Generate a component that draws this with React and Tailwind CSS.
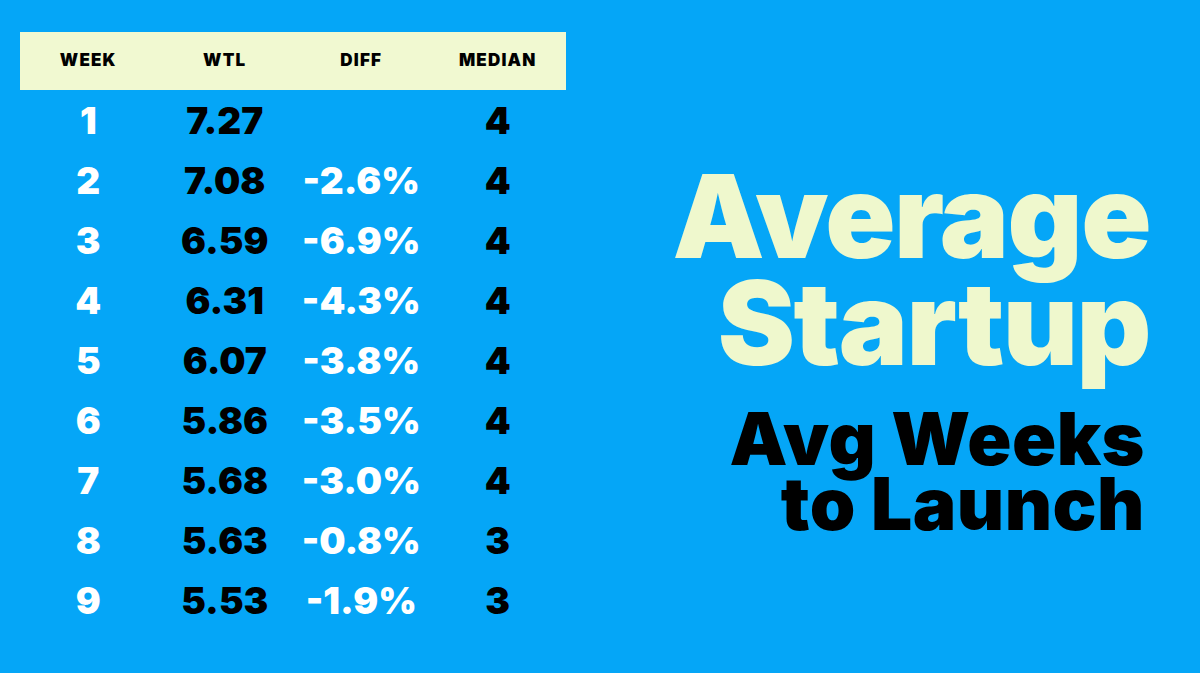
import React from "react";

const rows = [
  ["1", "7.27", "", "4"],
  ["2", "7.08", "-2.6%", "4"],
  ["3", "6.59", "-6.9%", "4"],
  ["4", "6.31", "-4.3%", "4"],
  ["5", "6.07", "-3.8%", "4"],
  ["6", "5.86", "-3.5%", "4"],
  ["7", "5.68", "-3.0%", "4"],
  ["8", "5.63", "-0.8%", "3"],
  ["9", "5.53", "-1.9%", "3"],
];

export default function App() {
  return (
    <div
      className="w-[1200px] h-[673px] bg-[#05a6f7] flex overflow-hidden"
      style={{ fontFamily: "Inter, 'Liberation Sans', sans-serif" }}
    >
      <div className="w-[546px] ml-[20px] mt-[32px] flex flex-col">
        <div className="h-[58px] bg-[#f1f9d1] grid grid-cols-4 items-center text-center text-[17px] font-black text-black tracking-[1.2px]">
          <div>WEEK</div>
          <div>WTL</div>
          <div>DIFF</div>
          <div>MEDIAN</div>
        </div>
        {rows.map((r) => (
          <div
            key={r[0]}
            className="h-[60px] grid grid-cols-4 items-center text-center text-[37px] font-black leading-none"
          >
            <div className="text-white">{r[0]}</div>
            <div className="text-black">{r[1]}</div>
            <div className="text-white">{r[2]}</div>
            <div className="text-black">{r[3]}</div>
          </div>
        ))}
      </div>
      <div className="flex-1 flex flex-col items-end text-right pr-[50px] pt-[163px]">
        <div className="text-[116px] leading-[107px] font-black text-[#eff8cd] tracking-[-1.5px]">
          <div>Average</div>
          <div>Startup</div>
        </div>
        <div className="mt-[29px] mr-[5px] text-[73px] leading-[65px] font-black text-black tracking-[0.5px]">
          <div>Avg Weeks</div>
          <div>to Launch</div>
        </div>
      </div>
    </div>
  );
}
